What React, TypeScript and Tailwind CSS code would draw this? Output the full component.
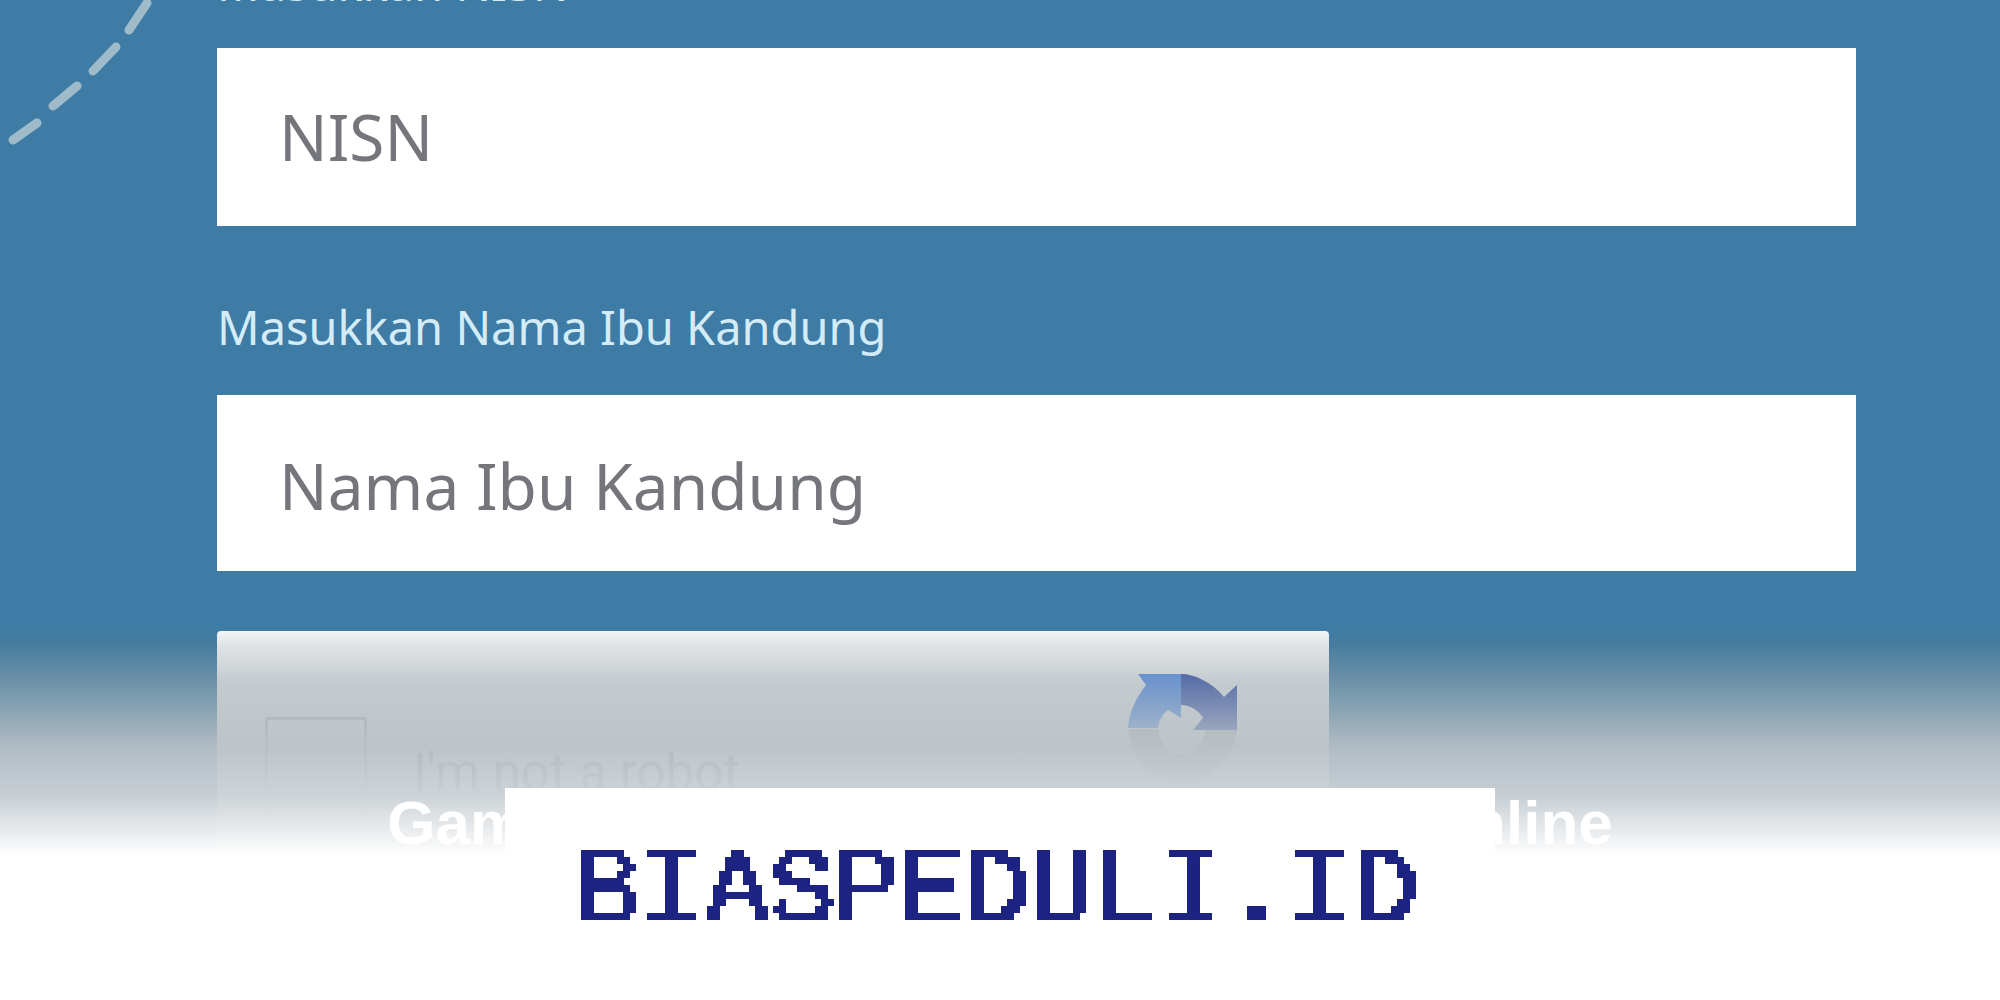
export default function App() {
  return (
    <div className="relative h-[1000px] w-[2000px] overflow-hidden bg-[#3e7ca5]">
      <svg width="0" height="0" className="absolute">
        <defs>
          <filter id="pix" x="0" y="0" width="100%" height="100%" filterUnits="objectBoundingBox" primitiveUnits="userSpaceOnUse" colorInterpolationFilters="sRGB">
            <feComponentTransfer in="SourceGraphic" result="hard">
              <feFuncA type="discrete" tableValues="0 1" />
            </feComponentTransfer>
            <feMorphology in="hard" operator="dilate" radius="1 0" result="wide" />
            <feFlood x="3" y="3" width="1" height="1" floodColor="#000" />
            <feComposite width="7" height="7" />
            <feTile result="grid" />
            <feComposite in="wide" in2="grid" operator="in" />
            <feMorphology operator="dilate" radius="3" />
          </filter>
        </defs>
      </svg>

      <svg className="absolute left-0 top-0" width="170" height="160" viewBox="0 0 170 160" fill="none">
        <path d="M13 140 L37 123 M53 106 L77 86 M93 71 L116 47 M129 30 L147 3" stroke="#9fbbc9" strokeWidth="9" strokeLinecap="round" />
      </svg>

      <div className="flex flex-col pl-[217px] pr-[144px]">
        <label className="-mt-[40px] h-[88px] font-['Noto_Sans'] text-[47px] leading-[47px] text-[#d3ecf8]">Masukkan NISN</label>
        <div className="flex h-[178px] items-center bg-white pl-[62px]">
          <span className="font-['Noto_Sans'] text-[64px] leading-none text-[#74767c]">NISN</span>
        </div>
        <label className="mt-[79px] h-[44px] font-['Noto_Sans'] text-[47px] leading-[44px] text-[#d3ecf8]">Masukkan Nama Ibu Kandung</label>
        <div className="mt-[46px] flex h-[176px] items-center bg-white pl-[62px]">
          <span className="mt-[6px] font-['Noto_Sans'] text-[64px] leading-none text-[#74767c]">Nama Ibu Kandung</span>
        </div>
        <div className="mt-[60px] flex h-[260px] w-[1112px] items-start rounded-[4px] bg-[#f9f9f9] pl-[48px] pt-[86px]">
          <div className="h-[113px] w-[102px] rounded-[3px] border-[3px] border-[#c1c1c1]" />
          <span className="ml-[46px] mt-[30px] font-['Roboto'] text-[51px] leading-none text-[#6f7477]">I'm not a robot</span>
          <svg className="ml-[388px] -mt-[43px]" width="110" height="110" viewBox="0 0 110 110" fill="none">
            <path d="M0 55 C4 85 24 109 54 109 C84 109 104 85 109 56 L78 56 C74 72 66 80 54 80 C40 80 32 70 30 55 Z" fill="#c2c2c2" />
            <path d="M10 0 H53 V44 L40 36 C34 40 31 47 30 54 H0 C1 38 8 24 18 11 Z" fill="#4285f4" />
            <path d="M53 0 C66 0 84 8 96 23 L109 11 V56 H65 L75 44 C72 38 63 31 53 31 Z" fill="#1c3aa9" />
          </svg>
        </div>
      </div>

      <div className="absolute inset-x-0 top-[628px] h-[372px] bg-[linear-gradient(to_bottom,rgba(80,100,115,0)_0px,rgba(110,125,135,0.17)_16px,rgba(151,165,172,0.55)_55px,rgba(184,192,197,0.93)_118px,rgba(205,211,215,0.97)_170px,#ffffff_228px)]" />
      <div className="absolute inset-x-0 top-[790px] text-center font-['Liberation_Sans'] text-[62px] font-bold leading-[66px] text-white">Gambar: Cara Cek Bantuan PIP via online</div>
      <div className="absolute left-[505px] top-[788px] flex h-[212px] w-[990px] justify-center bg-white pt-[55px]">
        <span className="-ml-[8px] block h-[100px] origin-center scale-x-[1.0286] font-['Liberation_Mono'] text-[108px] leading-[100px] tracking-[-1.8px] text-[#1c2380] [filter:url(#pix)]">BIASPEDULI.ID</span>
      </div>
    </div>
  );
}
